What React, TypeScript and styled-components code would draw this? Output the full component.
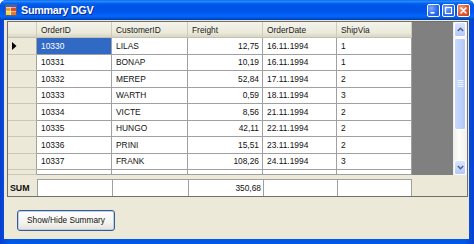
import React from 'react'
import styled, { createGlobalStyle } from 'styled-components'

const GlobalStyle = createGlobalStyle`
  html, body {
    margin: 0;
    padding: 0;
    background: #ffffff;
  }
  body {
    font-family: "Liberation Sans", Arial, sans-serif;
  }
`

const orders = [
  { id: '10330', customer: 'LILAS', freight: '12,75', date: '16.11.1994', ship: '1' },
  { id: '10331', customer: 'BONAP', freight: '10,19', date: '16.11.1994', ship: '1' },
  { id: '10332', customer: 'MEREP', freight: '52,84', date: '17.11.1994', ship: '2' },
  { id: '10333', customer: 'WARTH', freight: '0,59', date: '18.11.1994', ship: '3' },
  { id: '10334', customer: 'VICTE', freight: '8,56', date: '21.11.1994', ship: '2' },
  { id: '10335', customer: 'HUNGO', freight: '42,11', date: '22.11.1994', ship: '2' },
  { id: '10336', customer: 'PRINI', freight: '15,51', date: '23.11.1994', ship: '2' },
  { id: '10337', customer: 'FRANK', freight: '108,26', date: '24.11.1994', ship: '3' },
]

const columns = ['OrderID', 'CustomerID', 'Freight', 'OrderDate', 'ShipVia']

const Window = styled.div`
  width: 474px;
  height: 244px;
  display: flex;
  flex-direction: column;
  background: linear-gradient(90deg, #0a3fd0 0%, #0058e6 2%, #0058e6 98%, #0a3fd0 100%);
  border-radius: 6px 6px 0 0;
  overflow: hidden;
`

const TitleBar = styled.div`
  height: 20px;
  flex: none;
  display: flex;
  align-items: center;
  padding: 0 4px 0 5px;
  background: linear-gradient(
    180deg,
    #0058ee 0%,
    #3593ff 5%,
    #1b7fff 10%,
    #0262ee 18%,
    #0055e5 28%,
    #0055eb 56%,
    #005bf5 68%,
    #0468fb 80%,
    #005ce9 88%,
    #0047c0 95%,
    #003aa8 100%
  );
`

const TitleText = styled.span`
  margin-left: 4px;
  flex: 1;
  color: #ffffff;
  font-weight: bold;
  font-size: 10.8px;
  letter-spacing: -0.3px;
  text-shadow: 1px 1px 0 #0a2a8a;
`

const CaptionButtons = styled.div`
  display: flex;
  gap: 2px;
`

const CaptionButton = styled.div<{ $close?: boolean }>`
  width: 13px;
  height: 13px;
  box-sizing: border-box;
  border: 1px solid #ffffff;
  border-radius: 2px;
  display: flex;
  align-items: center;
  justify-content: center;
  background: ${(p) =>
    p.$close
      ? 'radial-gradient(circle at 30% 30%, #f29b7a 0%, #e1562e 55%, #c63a17 100%)'
      : 'radial-gradient(circle at 30% 30%, #7fa8ff 0%, #2d6bf0 55%, #1c52d8 100%)'};
`

const Client = styled.div`
  flex: 1;
  margin: 0 5px 5px 4px;
  padding: 1px 0 0 3px;
  background: #ece9d8;
  display: flex;
  flex-direction: column;
`

const GridFrame = styled.div`
  width: 461px;
  height: 176px;
  box-sizing: border-box;
  border: 1px solid #6f6f6f;
  display: flex;
  flex-direction: column;
  background: #ece9d8;
`

const MainArea = styled.div`
  height: 153px;
  display: flex;
`

const Table = styled.div`
  width: 404px;
  display: grid;
  grid-template-columns: 29px 75px 76px 75px 74px 75px;
  grid-template-rows: 16px repeat(8, 16.5px) 1fr;
  font-size: 8.4px;
  color: #111111;
`

const Corner = styled.div`
  background: linear-gradient(180deg, #f2f1e8 0%, #ebeadb 70%, #d8d5c6 100%);
  border-right: 1px solid #cfccbc;
  border-bottom: 1px solid #c4c1b0;
`

const HeaderCell = styled.div`
  box-sizing: border-box;
  display: flex;
  align-items: center;
  padding: 0 4px;
  background: linear-gradient(180deg, #f4f3ec 0%, #ebeadb 70%, #d8d5c6 100%);
  border-right: 1px solid #cfccbc;
  border-bottom: 1px solid #c4c1b0;
  color: #222222;
  white-space: nowrap;
  overflow: hidden;
`

const RowHeader = styled.div`
  box-sizing: border-box;
  display: flex;
  align-items: center;
  padding-left: 4px;
  background: #ece9d8;
  border-right: 1px solid #a6a49a;
  border-bottom: 1px solid #cbc8b8;
`

const Cell = styled.div<{ $right?: boolean; $selected?: boolean }>`
  box-sizing: border-box;
  display: flex;
  align-items: center;
  justify-content: ${(p) => (p.$right ? 'flex-end' : 'flex-start')};
  padding: 0 ${(p) => (p.$right ? '3px' : '4px')};
  background: ${(p) => (p.$selected ? '#316ac5' : '#ffffff')};
  color: ${(p) => (p.$selected ? '#ffffff' : '#111111')};
  border-right: 1px solid #a0a0a0;
  border-bottom: 1px solid #a0a0a0;
  white-space: nowrap;
`

const GreyFill = styled.div`
  flex: 1;
  background: #808080;
`

const ScrollBar = styled.div`
  width: 14px;
  display: flex;
  flex-direction: column;
  background: linear-gradient(90deg, #eeede5 0%, #fcfcfa 40%, #f3f1ec 100%);
`

const ArrowButton = styled.div`
  height: 15px;
  flex: none;
  box-sizing: border-box;
  margin: 0 1px;
  border: 1px solid #ffffff;
  border-radius: 2px;
  background: linear-gradient(180deg, #dbe6fe 0%, #c3d4fd 60%, #b2c8f8 100%);
  display: flex;
  align-items: center;
  justify-content: center;
`

const Thumb = styled.div`
  height: 92px;
  flex: none;
  box-sizing: border-box;
  margin: 1px 1px;
  border: 1px solid #ffffff;
  border-radius: 2px;
  background: linear-gradient(90deg, #c9d8fc 0%, #bcd0fb 60%, #b1c6f6 100%);
  display: flex;
  align-items: center;
  justify-content: center;
`

const Track = styled.div`
  flex: 1;
`

const Band = styled.div`
  height: 4px;
  flex: none;
`

const SumRow = styled.div`
  height: 17px;
  display: flex;
  font-size: 8.4px;
  color: #111111;
`

const SumHeader = styled.div`
  width: 29px;
  box-sizing: border-box;
  display: flex;
  align-items: center;
  padding-left: 2px;
  font-weight: bold;
  font-size: 8.8px;
`

const SumCell = styled.div<{ $w: number; $right?: boolean; $last?: boolean }>`
  width: ${(p) => p.$w}px;
  box-sizing: border-box;
  display: flex;
  align-items: center;
  justify-content: ${(p) => (p.$right ? 'flex-end' : 'flex-start')};
  padding: 0 2px;
  background: #ffffff;
  border-top: 1px solid #a0a0a0;
  border-left: 1px solid #a0a0a0;
  border-right: ${(p) => (p.$last ? '1px solid #a0a0a0' : 'none')};
`

const ButtonRow = styled.div`
  padding: 12px 0 0 10px;
`

const PushButton = styled.button`
  width: 98px;
  height: 21px;
  padding: 0;
  border: 1px solid #3d5a8e;
  border-radius: 3px;
  background: linear-gradient(180deg, #ffffff 0%, #f5f4ef 60%, #e3e1d7 100%);
  box-shadow: inset 0 0 0 1px #b9cff3;
  font-family: "Liberation Sans", Arial, sans-serif;
  font-size: 8.3px;
  color: #111111;
`

const AppIcon = () => (
  <svg width="12" height="12" viewBox="0 0 12 12">
    <rect x="0.5" y="0.5" width="11" height="11" fill="#ffffff" stroke="#4d5f8a" />
    <rect x="1" y="1" width="10" height="2" fill="#3a62c8" />
    <rect x="1" y="3.5" width="4.5" height="3.5" fill="#f0a030" />
    <rect x="6" y="3.5" width="5" height="3.5" fill="#e04a2a" />
    <rect x="1" y="7.5" width="4.5" height="3.5" fill="#f7d346" />
    <rect x="6" y="7.5" width="5" height="3.5" fill="#e87a30" />
  </svg>
)

const Glyph = ({ kind }: { kind: 'min' | 'max' | 'close' }) => (
  <svg width="9" height="9" viewBox="0 0 9 9">
    {kind === 'min' && <rect x="1.5" y="6" width="4" height="1.6" fill="#ffffff" />}
    {kind === 'max' && (
      <rect x="1.5" y="1.5" width="6" height="6" fill="none" stroke="#ffffff" strokeWidth="1.2" />
    )}
    {kind === 'close' && (
      <path d="M2 2 L7 7 M7 2 L2 7" stroke="#ffffff" strokeWidth="1.6" strokeLinecap="round" />
    )}
  </svg>
)

const Chevron = ({ up }: { up?: boolean }) => (
  <svg width="7" height="5" viewBox="0 0 7 5">
    <path
      d={up ? 'M0.8 4 L3.5 1.2 L6.2 4' : 'M0.8 1 L3.5 3.8 L6.2 1'}
      fill="none"
      stroke="#4d6185"
      strokeWidth="1.4"
    />
  </svg>
)

const Grip = () => (
  <svg width="7" height="8" viewBox="0 0 7 8">
    {[1, 3, 5, 7].map((y) => (
      <line key={y} x1="0.5" x2="6.5" y1={y - 0.5} y2={y - 0.5} stroke="#eef4fe" />
    ))}
  </svg>
)

const RowArrow = () => (
  <svg width="5" height="8" viewBox="0 0 5 8">
    <path d="M0 0 L4.5 4 L0 8 Z" fill="#000000" />
  </svg>
)

export default function App() {
  return (
    <>
      <GlobalStyle />
      <Window>
        <TitleBar>
          <AppIcon />
          <TitleText>Summary DGV</TitleText>
          <CaptionButtons>
            <CaptionButton>
              <Glyph kind="min" />
            </CaptionButton>
            <CaptionButton>
              <Glyph kind="max" />
            </CaptionButton>
            <CaptionButton $close>
              <Glyph kind="close" />
            </CaptionButton>
          </CaptionButtons>
        </TitleBar>
        <Client>
          <GridFrame>
            <MainArea>
              <Table>
                <Corner />
                {columns.map((c) => (
                  <HeaderCell key={c}>{c}</HeaderCell>
                ))}
                {orders.map((o, i) => (
                  <React.Fragment key={o.id}>
                    <RowHeader>{i === 0 && <RowArrow />}</RowHeader>
                    <Cell $selected={i === 0}>{o.id}</Cell>
                    <Cell>{o.customer}</Cell>
                    <Cell $right>{o.freight}</Cell>
                    <Cell>{o.date}</Cell>
                    <Cell>{o.ship}</Cell>
                  </React.Fragment>
                ))}
                <RowHeader />
                <Cell />
                <Cell />
                <Cell />
                <Cell />
                <Cell />
              </Table>
              <GreyFill />
              <ScrollBar>
                <ArrowButton>
                  <Chevron up />
                </ArrowButton>
                <Thumb>
                  <Grip />
                </Thumb>
                <Track />
                <ArrowButton>
                  <Chevron />
                </ArrowButton>
              </ScrollBar>
            </MainArea>
            <Band />
            <SumRow>
              <SumHeader>SUM</SumHeader>
              <SumCell $w={75} />
              <SumCell $w={76} />
              <SumCell $w={75} $right>
                350,68
              </SumCell>
              <SumCell $w={74} />
              <SumCell $w={75} $last />
            </SumRow>
          </GridFrame>
          <ButtonRow>
            <PushButton>Show/Hide Summary</PushButton>
          </ButtonRow>
        </Client>
      </Window>
    </>
  )
}
